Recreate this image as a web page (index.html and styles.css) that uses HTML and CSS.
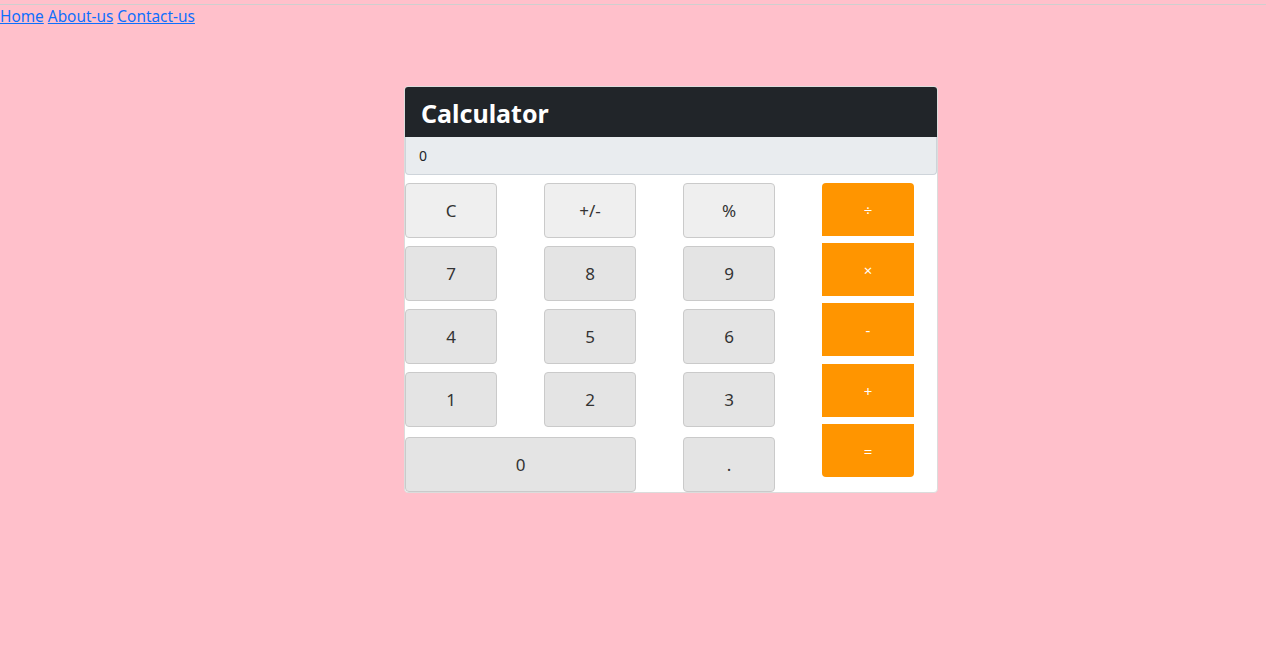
FILE: index.html
```html
<!DOCTYPE html>
<html>
<head>
<meta charset="utf-8">
<link rel="stylesheet" href="styles.css">
</head>
<body>
<div class="topline"></div>
<nav class="nav"><a href="#">Home</a> <a href="#">About-us</a> <a href="#">Contact-us</a></nav>
<main class="page">
  <section class="card">
    <header class="card-head">Calculator</header>
    <div class="display">0</div>
    <div class="pad">
      <div class="keys">
        <button class="key light">C</button>
        <button class="key light">+/-</button>
        <button class="key light">%</button>
        <button class="key">7</button>
        <button class="key">8</button>
        <button class="key">9</button>
        <button class="key">4</button>
        <button class="key">5</button>
        <button class="key">6</button>
        <button class="key">1</button>
        <button class="key">2</button>
        <button class="key">3</button>
        <button class="key zero last">0</button>
        <button class="key last">.</button>
      </div>
      <div class="ops">
        <button class="op">÷</button>
        <button class="op">×</button>
        <button class="op">-</button>
        <button class="op">+</button>
        <button class="op">=</button>
      </div>
    </div>
  </section>
</main>
</body>
</html>
```
FILE: styles.css
```css
html, body {
  margin: 0;
  padding: 0;
  background: #ffc0cb;
  font-family: "Noto Sans", "Open Sans", sans-serif;
}
.topline {
  height: 4px;
  border-bottom: 1px solid #cfcfcf;
}
.nav {
  font-size: 15.4px;
  line-height: 24px;
  height: 24px;
}
.nav a {
  color: #0d6efd;
  text-decoration: underline;
}
.page {
  padding: 57px 0 0 404px;
}
.card {
  box-sizing: border-box;
  width: 534px;
  background: #fff;
  border: 1px solid #dcdcdc;
  border-radius: 4px;
  overflow: hidden;
}
.card-head {
  background: #212529;
  color: #fff;
  font-weight: 700;
  font-size: 25px;
  height: 50px;
  line-height: 52px;
  padding-left: 16px;
}
.display {
  background: #e9ecef;
  border: 1px solid #ced4da;
  border-top: none;
  border-radius: 0 0 4px 4px;
  height: 37px;
  line-height: 37px;
  padding-left: 13px;
  font-size: 14px;
  color: #212529;
}
.pad {
  display: flex;
  padding-top: 8px;
}
.keys {
  display: grid;
  grid-template-columns: 92px 92px 92px;
  column-gap: 47px;
  row-gap: 8px;
  width: 417px;
}
.key {
  height: 55px;
  border: 1px solid #cacaca;
  border-radius: 4px;
  background: #e4e4e4;
  font-family: "Noto Sans", "Open Sans", sans-serif;
  font-size: 17px;
  color: #333;
  padding: 0;
}
.key.light {
  background: #efefef;
}
.key.zero {
  grid-column: span 2;
}
.key.last {
  margin-top: 2px;
}
.ops {
  display: flex;
  flex-direction: column;
  gap: 7px;
  width: 92px;
}
.op {
  height: 53px;
  background: #ff9500;
  border: none;
  border-radius: 0;
  color: #fff;
  font-family: "Noto Sans", "Open Sans", sans-serif;
  font-size: 15px;
  padding: 0;
}
.op:nth-child(4) {
  margin-top: 1px;
}
.op:first-child {
  border-radius: 4px 4px 0 0;
}
.op:last-child {
  border-radius: 0 0 4px 4px;
}
```
